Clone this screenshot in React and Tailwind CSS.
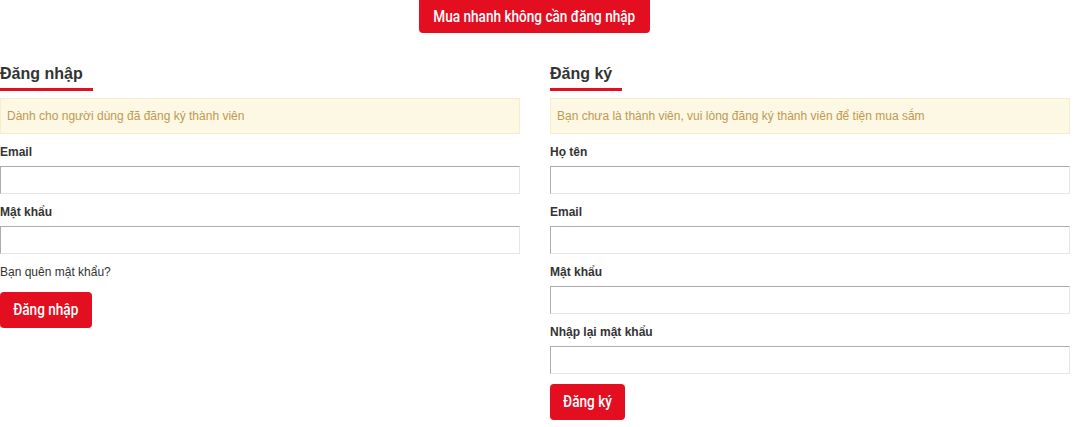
const roboto = { fontFamily: 'Roboto, "Liberation Sans", sans-serif' };

function Field({ label }) {
  return (
    <div className="mb-[10px]">
      <label className="block text-[12px] leading-[17px] font-bold text-[#333] mb-[5px]">{label}</label>
      <input
        type="text"
        className="block w-full h-[28px] bg-white border border-t-[#acacac] border-l-[#acacac] border-r-[#e6e6e6] border-b-[#e6e6e6] outline-none"
      />
    </div>
  );
}

function Heading({ children }) {
  return (
    <h2 className="inline-block pr-[10px] pb-[2px] border-b-[3px] border-[#e30e20] text-[16px] leading-[24px] font-bold text-[#333]">
      {children}
    </h2>
  );
}

function Notice({ children }) {
  return (
    <div className="mt-[7px] mb-[10px] h-[36px] flex items-center px-[6px] bg-[#fcf8e3] border border-[#faebcc] text-[12px] text-[#c09853]">
      {children}
    </div>
  );
}

// condensed look: Roboto squeezed horizontally
function Condensed({ children }) {
  return (
    <span style={roboto} className="inline-block whitespace-nowrap text-[17px] font-medium scale-x-[0.8]">
      {children}
    </span>
  );
}

function RedButton({ children, className = "" }) {
  return (
    <button className={"h-[36px] flex items-center justify-center bg-[#e30e20] text-white rounded-[4px] " + className}>
      <Condensed>{children}</Condensed>
    </button>
  );
}

export default function App() {
  return (
    <div className="w-[1081px] h-[427px] bg-white overflow-hidden" style={{ fontFamily: '"Liberation Sans", Arial, sans-serif' }}>
      <div className="flex justify-center pr-[12px]">
        <button className="h-[33px] w-[231px] flex items-center justify-center bg-[#e30e20] text-white rounded-b-[4px]">
          <Condensed>Mua nhanh không cần đăng nhập</Condensed>
        </button>
      </div>

      <div className="grid grid-cols-[520px_520px] gap-x-[30px] mt-[29px]">
        <div>
          <Heading>Đăng nhập</Heading>
          <Notice>Dành cho người dùng đã đăng ký thành viên</Notice>
          <Field label="Email" />
          <Field label="Mật khẩu" />
          <p className="text-[12px] leading-[17px] text-[#333] mt-[9px]">Bạn quên mật khẩu?</p>
          <RedButton className="mt-[11px] w-[92px]">Đăng nhập</RedButton>
        </div>

        <div>
          <Heading>Đăng ký</Heading>
          <Notice>Bạn chưa là thành viên, vui lòng đăng ký thành viên để tiện mua sắm</Notice>
          <Field label="Họ tên" />
          <Field label="Email" />
          <Field label="Mật khẩu" />
          <Field label="Nhập lại mật khẩu" />
          <RedButton className="mt-[1px] w-[75px]">Đăng ký</RedButton>
        </div>
      </div>
    </div>
  );
}
